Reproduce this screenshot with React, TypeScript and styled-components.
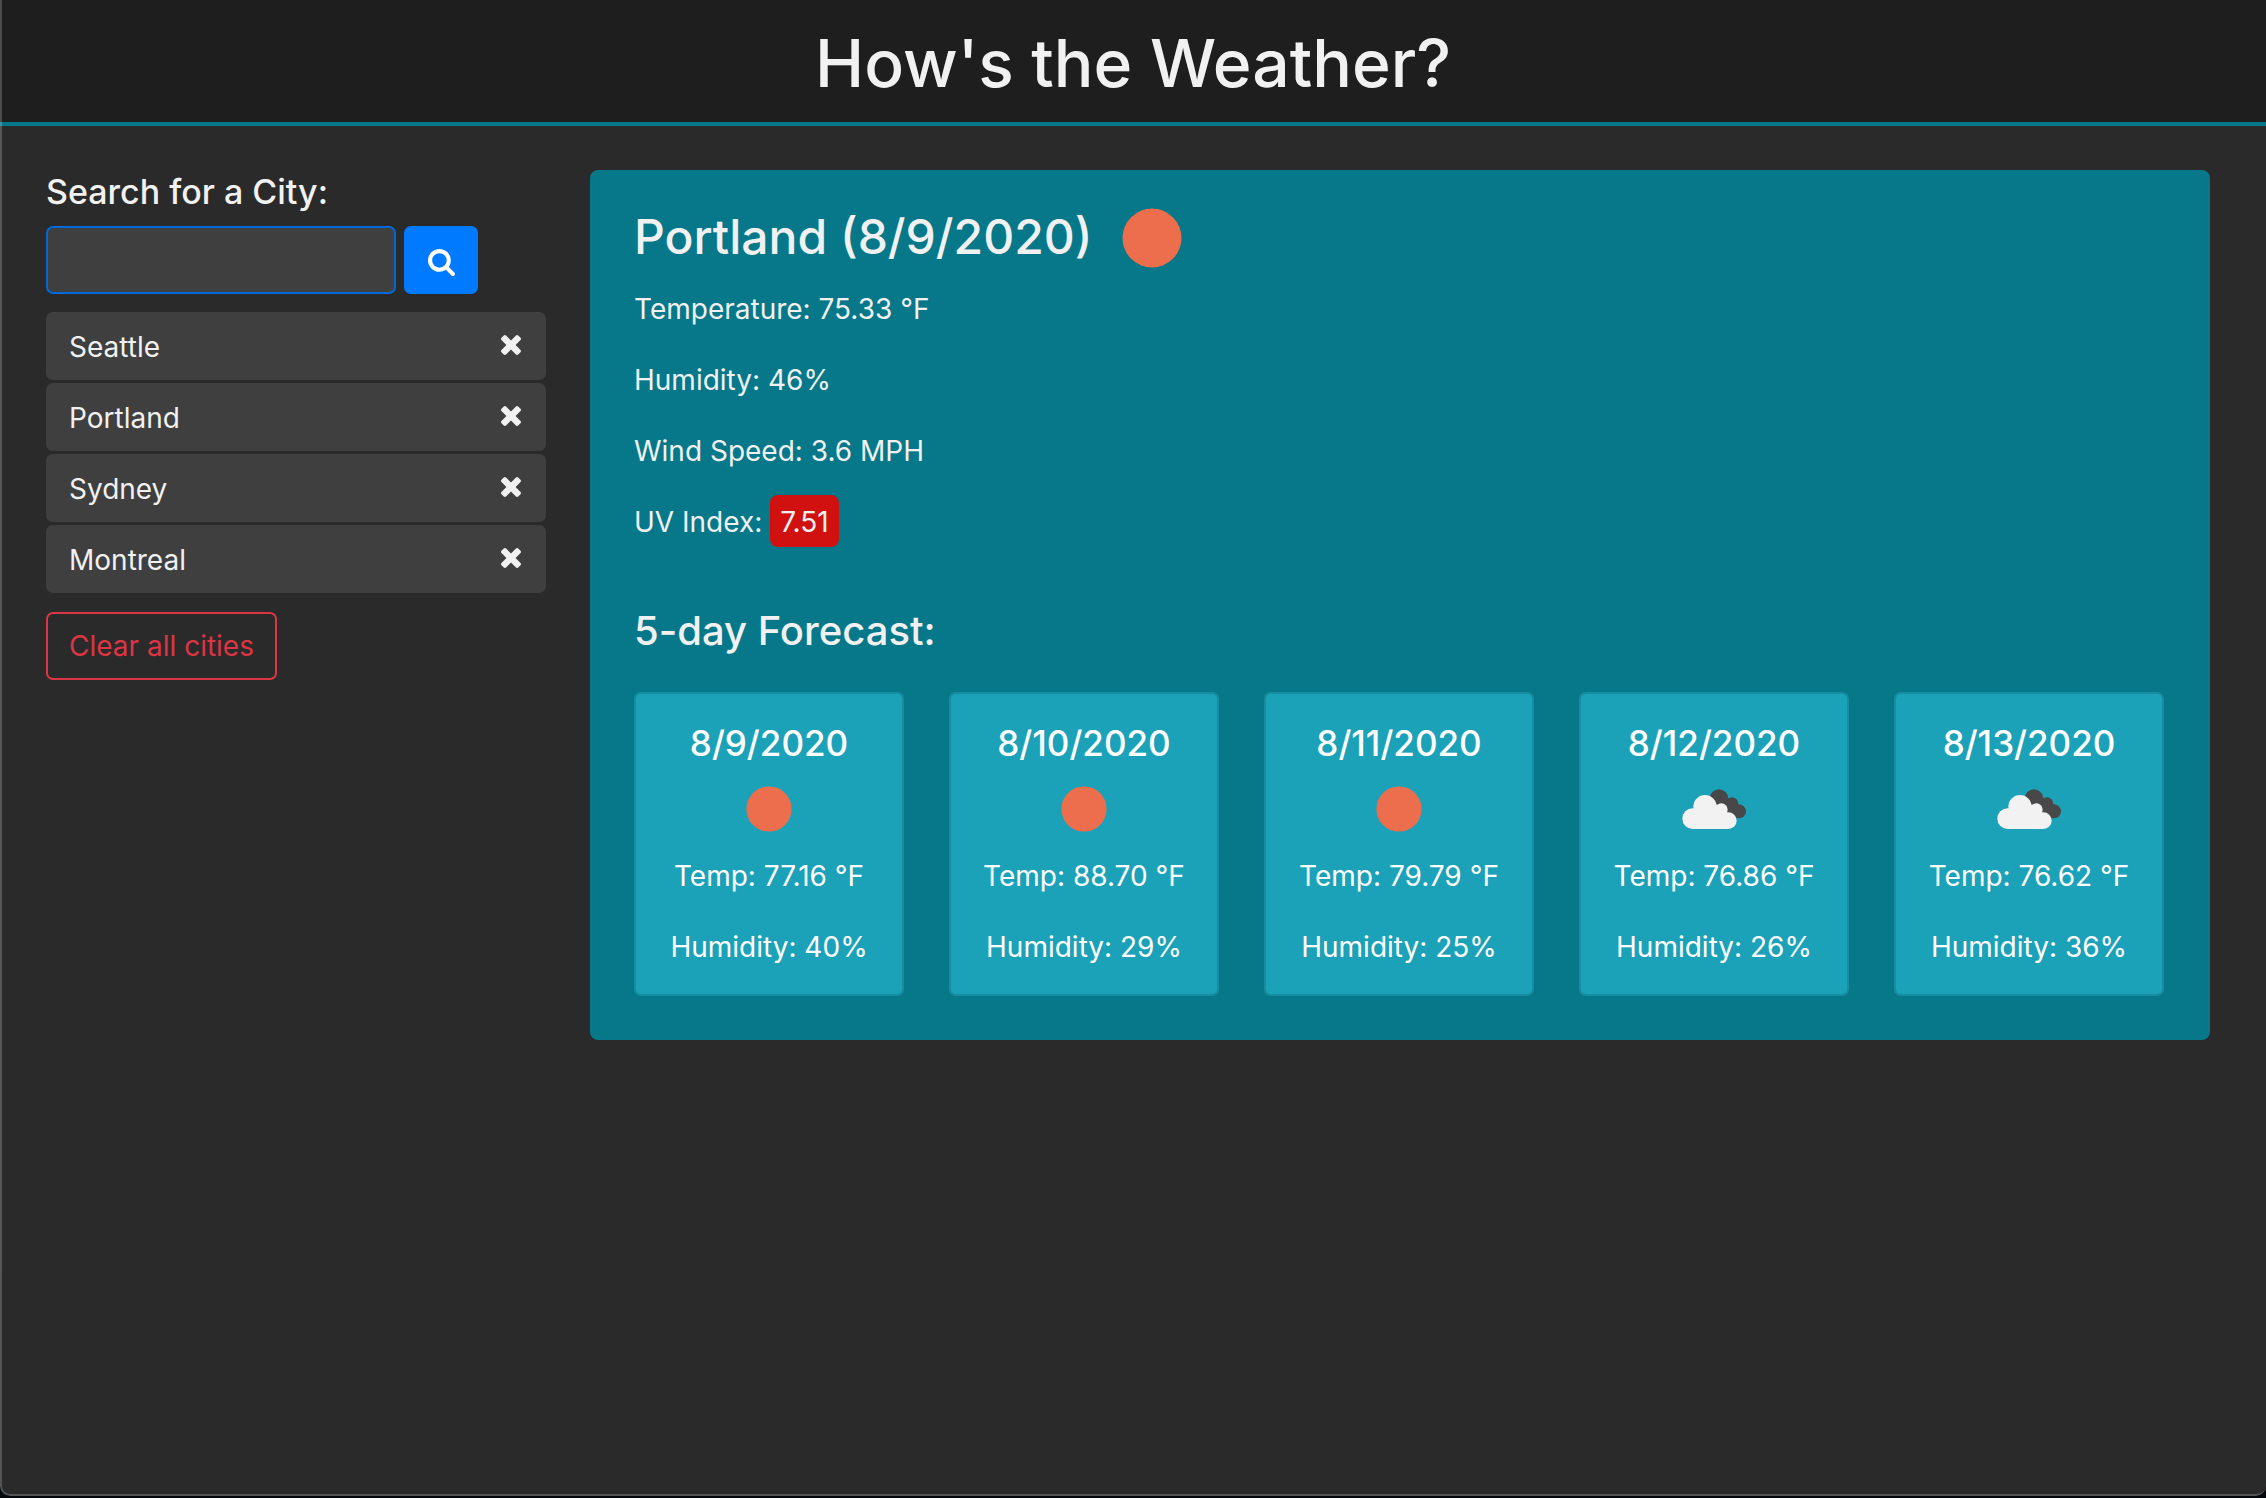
import React, { useState } from "react";
import styled, { createGlobalStyle } from "styled-components";

const color = {
  backdrop: "#04070c",
  header: "#1e1e1e",
  page: "#2a2a2a",
  field: "#3f3f3f",
  teal: "#067889",
  card: "#1ca2b8",
  text: "#f1f1f1",
  primary: "#007bff",
  danger: "#dc3545",
  severe: "#d01110",
};

const GlobalStyle = createGlobalStyle`
  *, *::before, *::after { box-sizing: border-box; }
  body {
    margin: 0;
    background: ${color.backdrop};
    color: ${color.text};
    font-family: Inter, "Liberation Sans", sans-serif;
    font-size: 28px;
    line-height: 43px;
  }
  h1, h2, h3, h4, p, ul { margin: 0; padding: 0; }
  h1, h2, h3, h4 { font-weight: 500; }
  button, input { font: inherit; color: inherit; }
`;

const Frame = styled.div`
  position: relative;
  display: flex;
  flex-direction: column;
  min-height: calc(100vh - 2px);
  overflow: hidden;
  border-radius: 0 0 10px 10px;
  background: ${color.page};

  &::after {
    content: "";
    position: absolute;
    inset: 0;
    border: solid rgba(255, 255, 255, 0.2);
    border-width: 0 0 2px 2px;
    border-radius: inherit;
    pointer-events: none;
  }
`;

const Header = styled.header`
  padding: 21px 0 17px;
  border-bottom: 4px solid ${color.teal};
  background: ${color.header};
  text-align: center;
`;

const Title = styled.h1`
  font-size: 66px;
  line-height: 84px;
`;

const Layout = styled.main`
  display: grid;
  grid-template-columns: 500px minmax(0, 1fr);
  align-items: start;
  gap: 44px;
  padding: 44px 56px 44px 46px;
`;

const Sidebar = styled.aside`
  display: flex;
  flex-direction: column;
  align-items: flex-start;
`;

const SearchForm = styled.form`
  display: grid;
  grid-template-columns: 350px 74px;
  gap: 13px 8px;
`;

const SearchLabel = styled.label`
  grid-column: 1 / -1;
  font-size: 34px;
  font-weight: 500;
`;

const SearchInput = styled.input`
  min-width: 0;
  height: 68px;
  padding: 10px 22px;
  border: 2px solid #0069d9;
  border-radius: 7px;
  outline: none;
  background: ${color.field};
`;

const SearchButton = styled.button`
  display: flex;
  align-items: center;
  justify-content: center;
  padding: 4px 0 0;
  border: 0;
  border-radius: 7px;
  background: ${color.primary};
  color: #fff;
`;

const CityList = styled.ul`
  display: grid;
  gap: 3px;
  width: 100%;
  margin: 18px 0 19px;
  list-style: none;
`;

const CityRow = styled.li`
  display: flex;
  align-items: center;
  height: 68px;
  border-radius: 7px;
  background: ${color.field};
`;

const CityButton = styled.button`
  flex: 1;
  padding: 13px 0 11px 23px;
  border: 0;
  background: none;
  text-align: left;
`;

const RemoveButton = styled.button`
  display: flex;
  padding: 20px 25px 22px;
  border: 0;
  background: none;
`;

const ClearButton = styled.button`
  height: 68px;
  padding: 0 21px;
  border: 2px solid ${color.danger};
  border-radius: 7px;
  background: none;
  color: ${color.danger};
`;

const Panel = styled.section`
  padding: 32px 46px 44px 44px;
  border-radius: 8px;
  background: ${color.teal};
`;

const CityHeading = styled.div`
  display: flex;
  align-items: center;
  gap: 30px;
  height: 72px;
  margin-bottom: 14px;
`;

const CityTitle = styled.h2`
  padding-bottom: 2px;
  font-size: 48px;
  line-height: 60px;
`;

const Reading = styled.p`
  margin-bottom: 28px;
`;

const UvBadge = styled.span`
  padding: 10px 10px 8px;
  border-radius: 8px;
  background: ${color.severe};
`;

const ForecastTitle = styled.h3`
  margin: 61px 0 35px;
  font-size: 40px;
  line-height: 52px;
`;

const ForecastGrid = styled.div`
  display: grid;
  grid-template-columns: repeat(5, minmax(0, 1fr));
  gap: 45px;
`;

const DayCard = styled.article`
  display: flex;
  flex-direction: column;
  align-items: center;
  padding: 28px 0 25px;
  border: 2px solid #198da0;
  border-radius: 7px;
  background: ${color.card};
  color: #fff;
  white-space: nowrap;
`;

const DayDate = styled.h4`
  font-size: 35px;
  line-height: 42px;
`;

const DayIcon = styled.div`
  display: flex;
  align-items: center;
  height: 52px;
  margin: 19px 0 20px;
`;

const DayReading = styled.p`
  & + & {
    margin-top: 28px;
  }
`;

function Sun({ size }: { size: number }) {
  return (
    <svg width={size} height={size} viewBox="0 0 60 60" role="img" aria-label="Clear sky">
      <circle cx="30" cy="30" r="29.5" fill="#ec6e4c" />
    </svg>
  );
}

function Clouds() {
  return (
    <svg width="64" height="40" viewBox="72 57 192 120" role="img" aria-label="Broken clouds">
      <g fill="#48484a">
        <circle cx="183" cy="86" r="28" />
        <circle cx="222" cy="101" r="19" />
        <circle cx="243" cy="124" r="21" />
        <path d="M170 98 208 82 250 118 240 144 205 140Z" />
      </g>
      <g fill="#f2f2f2">
        <circle cx="104" cy="146" r="31" />
        <circle cx="141" cy="110" r="35" />
        <circle cx="190" cy="119" r="19" />
        <circle cx="211" cy="152" r="25" />
        <path d="M104 177 106 116 141 100 190 106 208 128 211 177Z" />
      </g>
    </svg>
  );
}

function SearchIcon() {
  return (
    <svg width="27" height="27" viewBox="64 128 1664 1664" fill="currentColor" aria-hidden="true">
      <path d="M1216 832q0-185-131.5-316.5t-316.5-131.5-316.5 131.5-131.5 316.5 131.5 316.5 316.5 131.5 316.5-131.5 131.5-316.5zm512 832q0 52-38 90t-90 38q-54 0-90-38l-343-342q-179 124-399 124-143 0-273.5-55.5t-225-150-150-225-55.5-273.5 55.5-273.5 150-225 225-150 273.5-55.5 273.5 55.5 225 150 150 225 55.5 273.5q0 220-124 399l343 343q37 37 37 90z" />
    </svg>
  );
}

function RemoveIcon() {
  return (
    <svg width="20" height="20" viewBox="302 366 1188 1188" fill="currentColor" aria-hidden="true">
      <path d="M1490 1322q0 40-28 68l-136 136q-28 28-68 28t-68-28l-294-294-294 294q-28 28-68 28t-68-28l-136-136q-28-28-28-68t28-68l294-294-294-294q-28-28-28-68t28-68l136-136q28-28 68-28t68 28l294 294 294-294q28-28 68-28t68 28l136 136q28 28 28 68t-28 68l-294 294 294 294q28 28 28 68z" />
    </svg>
  );
}

type Day = { date: string; sky: "sun" | "clouds"; temp: string; humidity: string };

const forecast: Day[] = [
  { date: "8/9/2020", sky: "sun", temp: "77.16", humidity: "40" },
  { date: "8/10/2020", sky: "sun", temp: "88.70", humidity: "29" },
  { date: "8/11/2020", sky: "sun", temp: "79.79", humidity: "25" },
  { date: "8/12/2020", sky: "clouds", temp: "76.86", humidity: "26" },
  { date: "8/13/2020", sky: "clouds", temp: "76.62", humidity: "36" },
];

export default function App() {
  const [cities, setCities] = useState(["Seattle", "Portland", "Sydney", "Montreal"]);
  const [query, setQuery] = useState("");

  const addCity = (event: React.FormEvent) => {
    event.preventDefault();
    const name = query.trim();
    if (name && !cities.includes(name)) setCities([...cities, name]);
    setQuery("");
  };

  return (
    <Frame>
      <GlobalStyle />
      <Header>
        <Title>How's the Weather?</Title>
      </Header>
      <Layout>
        <Sidebar>
          <SearchForm onSubmit={addCity}>
            <SearchLabel htmlFor="city">Search for a City:</SearchLabel>
            <SearchInput id="city" type="text" value={query} onChange={(e) => setQuery(e.target.value)} />
            <SearchButton type="submit" aria-label="Search">
              <SearchIcon />
            </SearchButton>
          </SearchForm>
          <CityList>
            {cities.map((city) => (
              <CityRow key={city}>
                <CityButton type="button">{city}</CityButton>
                <RemoveButton
                  type="button"
                  aria-label={`Remove ${city}`}
                  onClick={() => setCities(cities.filter((c) => c !== city))}
                >
                  <RemoveIcon />
                </RemoveButton>
              </CityRow>
            ))}
          </CityList>
          <ClearButton type="button" onClick={() => setCities([])}>
            Clear all cities
          </ClearButton>
        </Sidebar>
        <Panel>
          <CityHeading>
            <CityTitle>Portland (8/9/2020)</CityTitle>
            <Sun size={60} />
          </CityHeading>
          <Reading>Temperature: 75.33 °F</Reading>
          <Reading>Humidity: 46%</Reading>
          <Reading>Wind Speed: 3.6 MPH</Reading>
          <Reading>
            UV Index: <UvBadge>7.51</UvBadge>
          </Reading>
          <ForecastTitle>5-day Forecast:</ForecastTitle>
          <ForecastGrid>
            {forecast.map((day) => (
              <DayCard key={day.date}>
                <DayDate>{day.date}</DayDate>
                <DayIcon>{day.sky === "sun" ? <Sun size={46} /> : <Clouds />}</DayIcon>
                <DayReading>Temp: {day.temp} °F</DayReading>
                <DayReading>Humidity: {day.humidity}%</DayReading>
              </DayCard>
            ))}
          </ForecastGrid>
        </Panel>
      </Layout>
    </Frame>
  );
}
